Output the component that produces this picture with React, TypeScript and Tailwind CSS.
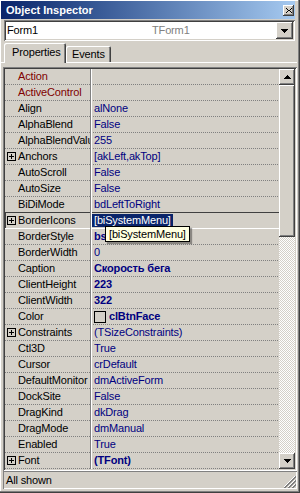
import React from "react";

type Row = {
  name: string;
  value?: string;
  bold?: boolean;
  plus?: boolean;
  maroon?: boolean;
  swatch?: boolean;
  selected?: boolean;
};

const rows: Row[] = [
  { name: "Action", maroon: true },
  { name: "ActiveControl", maroon: true },
  { name: "Align", value: "alNone" },
  { name: "AlphaBlend", value: "False" },
  { name: "AlphaBlendValue", value: "255" },
  { name: "Anchors", value: "[akLeft,akTop]", plus: true },
  { name: "AutoScroll", value: "False" },
  { name: "AutoSize", value: "False" },
  { name: "BiDiMode", value: "bdLeftToRight" },
  { name: "BorderIcons", value: "[biSystemMenu]", plus: true, selected: true },
  { name: "BorderStyle", value: "bsSizeable", bold: true },
  { name: "BorderWidth", value: "0" },
  { name: "Caption", value: "Скорость бега", bold: true },
  { name: "ClientHeight", value: "223", bold: true },
  { name: "ClientWidth", value: "322", bold: true },
  { name: "Color", value: "clBtnFace", bold: true, swatch: true },
  { name: "Constraints", value: "(TSizeConstraints)", plus: true },
  { name: "Ctl3D", value: "True" },
  { name: "Cursor", value: "crDefault" },
  { name: "DefaultMonitor", value: "dmActiveForm" },
  { name: "DockSite", value: "False" },
  { name: "DragKind", value: "dkDrag" },
  { name: "DragMode", value: "dmManual" },
  { name: "Enabled", value: "True" },
  { name: "Font", value: "(TFont)", plus: true, bold: true },
];

const raised =
  "shadow-[inset_-1px_-1px_#404040,inset_1px_1px_#ffffff,inset_-2px_-2px_#808080,inset_2px_2px_#d4d0c8]";

function PlusBox() {
  return (
    <svg
      className="absolute left-[2px] top-[3px]"
      width="9"
      height="9"
      viewBox="0 0 9 9"
      shapeRendering="crispEdges"
    >
      <rect x="0.5" y="0.5" width="8" height="8" fill="none" stroke="#000" />
      <line x1="2" y1="4.5" x2="7" y2="4.5" stroke="#000" />
      <line x1="4.5" y1="2" x2="4.5" y2="7" stroke="#000" />
    </svg>
  );
}

function Arrow({ up }: { up?: boolean }) {
  return (
    <svg width="7" height="4" viewBox="0 0 7 4" shapeRendering="crispEdges">
      {up ? (
        <polygon points="3.5,0 7,4 0,4" fill="#000" />
      ) : (
        <polygon points="0,0 7,0 3.5,4" fill="#000" />
      )}
    </svg>
  );
}

export default function App() {
  return (
    <div className="relative w-[300px] h-[493px] overflow-hidden bg-[#d4d0c8] font-['Liberation_Sans',Arial,sans-serif] text-[11px] tracking-[-0.15px] text-black shadow-[inset_-1px_-1px_#404040,inset_-2px_-2px_#808080,inset_1px_1px_#ffffff] pt-[1px] flex flex-col">
      {/* Title bar */}
      <div className="ml-[1px] w-[294px] h-[18px] flex items-center bg-linear-to-r from-[#0a246a] to-[#a6caf0]">
        <span className="pl-[5px] pt-[1px] text-white font-bold text-[11px] tracking-normal leading-none">
          Object Inspector
        </span>
        <div
          className={`ml-auto mr-[1px] w-[11px] h-[11px] bg-[#d4d0c8] flex items-center justify-center ${raised}`}
        >
          <svg width="6" height="5" viewBox="0 0 6 5" shapeRendering="crispEdges">
            <path d="M0 0h1v1H0zM5 0h1v1H5zM1 1h1v1H1zM4 1h1v1H4zM2 2h2v1H2zM1 3h1v1H1zM4 3h1v1H4zM0 4h1v1H0zM5 4h1v1H5z" fill="#000" />
          </svg>
        </div>
      </div>

      {/* Combo box */}
      <div className="ml-[4px] mt-[1px] w-[291px] h-[21px] bg-white flex items-center p-[2px] shadow-[inset_1px_1px_#808080,inset_-1px_-1px_#ffffff,inset_2px_2px_#404040,inset_-2px_-2px_#d4d0c8]">
        <div className="w-[146px] pl-[1px] leading-none">Form1</div>
        <div className="flex-1 text-[#808080] leading-none">TForm1</div>
        <div className={`w-[17px] h-[17px] bg-[#d4d0c8] flex items-center justify-center ${raised}`}>
          <Arrow />
        </div>
      </div>

      {/* Tabs */}
      <div className="relative ml-[1px] mt-[2px] w-[296px] h-[20px] flex items-end">
        <div className="absolute left-0 right-0 bottom-0 h-px bg-white" />
        <div className="relative z-10 ml-[3px] w-[62px] h-[20px] bg-[#d4d0c8] rounded-t-[2px] pl-[8px] pb-[1px] flex items-center shadow-[inset_1px_1px_#ffffff,inset_-1px_0_#404040,inset_-2px_0_#808080]">
          Properties
        </div>
        <div className="w-[45px] h-[16px] mb-[1px] rounded-t-[2px] pl-[6px] flex items-center shadow-[inset_1px_1px_#ffffff,inset_-1px_0_#404040,inset_-2px_0_#808080]">
          Events
        </div>
      </div>

      {/* Grid */}
      <div className="ml-[3px] mt-[4px] w-[294px] h-[404px] p-[2px] flex shadow-[inset_1px_1px_#808080,inset_-1px_-1px_#ffffff,inset_2px_2px_#404040,inset_-2px_-2px_#d4d0c8]">
        <div className="flex-1 flex flex-col">
          {rows.map((r, i) => {
            const line =
              i === 8
                ? "shadow-[inset_0_-1px_#404040]"
                : r.selected
                ? "shadow-[inset_0_-1px_#ffffff,inset_1px_0_#404040]"
                : "bg-[linear-gradient(to_right,#808080_50%,transparent_50%)] bg-[length:2px_1px] bg-repeat-x bg-bottom";
            return (
              <div key={r.name} className={`flex h-[16px] ${line}`}>
                <div
                  className={`relative w-[85px] h-[15px] overflow-hidden whitespace-nowrap pl-[13px] leading-[15px] ${
                    r.maroon ? "text-[#800000]" : "text-black"
                  }`}
                >
                  {r.plus && <PlusBox />}
                  {r.name}
                </div>
                <div className="w-[2px] h-[16px] border-l border-[#808080] bg-white" />
                <div
                  className={`flex-1 h-[15px] flex items-center pl-[2px] whitespace-nowrap overflow-hidden text-[#000080] ${
                    r.bold ? "font-bold" : ""
                  }`}
                >
                  {r.swatch && (
                    <span className="inline-block w-[12px] h-[12px] border border-black bg-[#d4d0c8] mr-[3px]" />
                  )}
                  {r.selected ? (
                    <span className="bg-[#0a246a] text-white px-[2px] -ml-[2px] leading-[13px]">
                      {r.value}
                    </span>
                  ) : (
                    <span className="leading-[15px]">{r.value}</span>
                  )}
                </div>
              </div>
            );
          })}
        </div>
        {/* Scrollbar */}
        <div className="w-[16px] flex flex-col">
          <div className={`h-[16px] bg-[#d4d0c8] flex items-center justify-center ${raised}`}>
            <Arrow up />
          </div>
          <div className={`h-[152px] bg-[#d4d0c8] ${raised}`} />
          <div className="flex-1 bg-[repeating-conic-gradient(#ffffff_0%_25%,#d4d0c8_0%_50%)] bg-[length:2px_2px]" />
          <div className={`h-[16px] bg-[#d4d0c8] flex items-center justify-center ${raised}`}>
            <Arrow />
          </div>
        </div>
      </div>

      {/* Status bar */}
      <div className="relative ml-[3px] w-[294px] h-[18px] mt-[0px] pl-[3px] flex items-center shadow-[inset_1px_1px_#808080,inset_-1px_-1px_#ffffff]">
        All shown
        <svg
          className="absolute right-[1px] bottom-[1px]"
          width="12"
          height="12"
          viewBox="0 0 12 12"
          shapeRendering="crispEdges"
        >
          <path d="M11 0L0 11" stroke="#ffffff" />
          <path d="M12 0L0 12M12 1L1 12" stroke="#808080" />
          <path d="M11 4L4 11" stroke="#ffffff" />
          <path d="M12 4L4 12M12 5L5 12" stroke="#808080" />
          <path d="M11 8L8 11" stroke="#ffffff" />
          <path d="M12 8L8 12M12 9L9 12" stroke="#808080" />
        </svg>
      </div>

      {/* Tooltip */}
      <div className="absolute left-[105px] top-[226px] h-[16px] px-[3px] border border-black bg-[#ffffe1] text-black leading-[14px] whitespace-nowrap shadow-[2px_2px_1px_rgba(0,0,0,0.35)]">
        [biSystemMenu]
      </div>
    </div>
  );
}
